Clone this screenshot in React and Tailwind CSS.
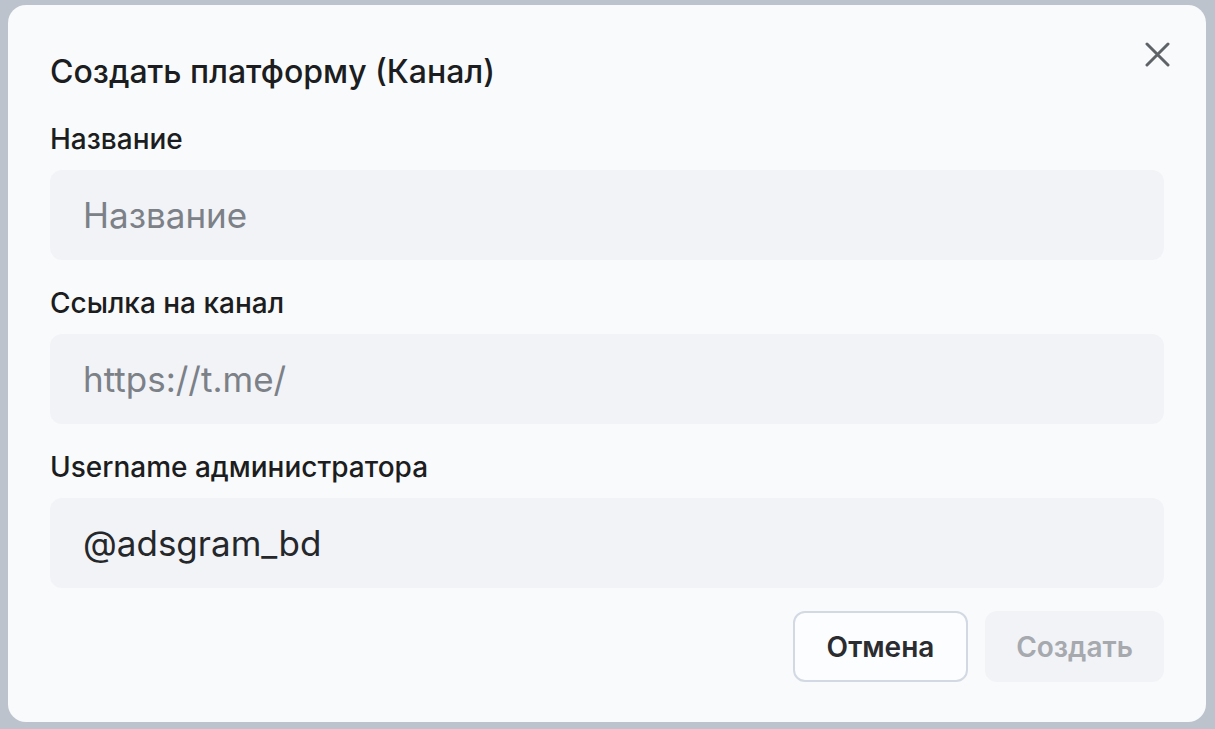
function Field({ label, placeholder, value, className }) {
  return (
    <div className={className}>
      <div className="text-[28px] leading-[36px] text-[#1c1d20] font-medium">{label}</div>
      <input
        className="mt-[13px] w-full h-[90px] rounded-[12px] bg-[#f1f3f7] px-[33px] text-[35px] text-[#25272b] placeholder:text-[#7c8087] outline-none"
        placeholder={placeholder}
        defaultValue={value}
      />
    </div>
  )
}

export default function App() {
  return (
    <div className="w-[1215px] h-[729px] bg-[#bcc3cc] pt-[5px] pl-[8px] font-['Inter',sans-serif]">
      <div className="relative w-[1198px] h-[717px] bg-[#f9fafc] rounded-[18px] px-[42px] pt-[47px]">
        {/* Header */}
        <h2 className="text-[32px] leading-[40px] text-[#1c1d20] font-medium">Создать платформу (Канал)</h2>
        <button className="absolute right-[36px] top-[37px] text-[#5f6368]">
          <svg width="25" height="25" viewBox="0 0 25 25" fill="none" stroke="currentColor" strokeWidth="3" strokeLinecap="round">
            <path d="M2 2L23 23M23 2L2 23" />
          </svg>
        </button>

        <Field className="mt-[29px]" label="Название" placeholder="Название" />
        <Field className="mt-[25px]" label="Ссылка на канал" placeholder="https://t.me/" />
        <Field className="mt-[25px]" label="Username администратора" value="@adsgram_bd" />

        {/* Footer */}
        <div className="mt-[23px] flex justify-end gap-[17px]">
          <button className="w-[175px] h-[71px] rounded-[12px] border-2 border-[#d3d9e3] bg-[#fcfdfe] text-[28px] font-semibold text-[#2a2c30]">
            Отмена
          </button>
          <button className="w-[179px] h-[71px] rounded-[12px] bg-[#f1f3f7] text-[28px] font-semibold text-[#a6a9ae]">
            Создать
          </button>
        </div>
      </div>
    </div>
  )
}
